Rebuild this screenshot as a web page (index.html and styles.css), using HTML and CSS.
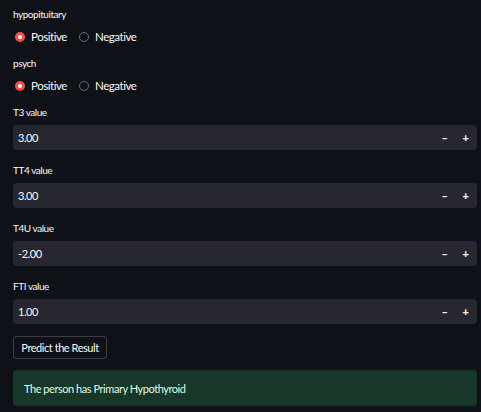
FILE: index.html
```html
<!DOCTYPE html>
<html>
<head>
<meta charset="utf-8">
<link rel="stylesheet" href="styles.css">
</head>
<body>
<div class="app">
  <div class="radio-block">
    <div class="label">hypopituitary</div>
    <div class="radio-row">
      <span class="opt"><span class="dot on"></span>Positive</span>
      <span class="opt"><span class="dot"></span>Negative</span>
    </div>
  </div>
  <div class="radio-block">
    <div class="label">psych</div>
    <div class="radio-row">
      <span class="opt"><span class="dot on"></span>Positive</span>
      <span class="opt"><span class="dot"></span>Negative</span>
    </div>
  </div>
  <div class="num-block">
    <div class="label">T3 value</div>
    <div class="num-input"><span class="val">3.00</span><span class="step minus">&#8211;</span><span class="step plus">+</span></div>
  </div>
  <div class="num-block">
    <div class="label">TT4 value</div>
    <div class="num-input"><span class="val">3.00</span><span class="step minus">&#8211;</span><span class="step plus">+</span></div>
  </div>
  <div class="num-block">
    <div class="label">T4U value</div>
    <div class="num-input"><span class="val">-2.00</span><span class="step minus">&#8211;</span><span class="step plus">+</span></div>
  </div>
  <div class="num-block">
    <div class="label">FTI value</div>
    <div class="num-input"><span class="val">1.00</span><span class="step minus">&#8211;</span><span class="step plus">+</span></div>
  </div>
  <button class="btn">Predict the Result</button>
  <div class="success">The person has Primary Hypothyroid</div>
</div>
</body>
</html>
```
FILE: styles.css
```css
html, body {
  margin: 0;
  padding: 0;
  background: #0e1117;
  height: 100%;
}
body {
  font-family: Lato, "Open Sans", sans-serif;
  color: #fafafa;
  overflow: hidden;
  letter-spacing: -0.45px;
}
.app {
  display: flex;
  flex-direction: column;
  margin-left: 13px;
  width: 464px;
  padding-top: 6px;
}
.label {
  height: 16px;
  line-height: 16px;
  font-size: 10px;
  color: #fafafa;
}
.radio-block {
  display: flex;
  flex-direction: column;
  gap: 4px;
  margin-bottom: 8px;
}
.radio-row {
  display: flex;
  align-items: center;
  height: 21px;
  gap: 12px;
}
.opt {
  display: flex;
  align-items: center;
  font-size: 11.5px;
  gap: 6px;
}
.dot {
  box-sizing: border-box;
  width: 10px;
  height: 10px;
  border-radius: 50%;
  border: 1.3px solid #6c6e77;
}
.opt:first-child .dot {
  margin-left: 2px;
}
.dot.on {
  background: #fff;
  border: 3px solid #ff4b4b;
}
.num-block {
  display: flex;
  flex-direction: column;
  gap: 5px;
  margin-bottom: 12px;
}
.num-input {
  display: flex;
  align-items: center;
  height: 25px;
  background: #262730;
  border-radius: 4px;
  font-size: 11px;
}
.val {
  flex: 1;
  padding-left: 5px;
}
.step {
  width: 21px;
  text-align: center;
  font-weight: 900;
  font-size: 11px;
}
.plus { margin-right: 1px; }
.btn {
  align-self: flex-start;
  height: 23px;
  width: 94px;
  padding: 0;
  background: #0e1117;
  color: #fafafa;
  border: 1px solid rgba(250,250,250,0.2);
  border-radius: 4px;
  font-family: Lato, "Open Sans", sans-serif;
  font-size: 11px;
  letter-spacing: -0.45px;
  margin-bottom: 11px;
}
.success {
  height: 36px;
  box-sizing: border-box;
  display: flex;
  align-items: center;
  padding-left: 11px;
  background: #173828;
  color: #dffde9;
  border-radius: 4px;
  font-size: 11px;
}
```
